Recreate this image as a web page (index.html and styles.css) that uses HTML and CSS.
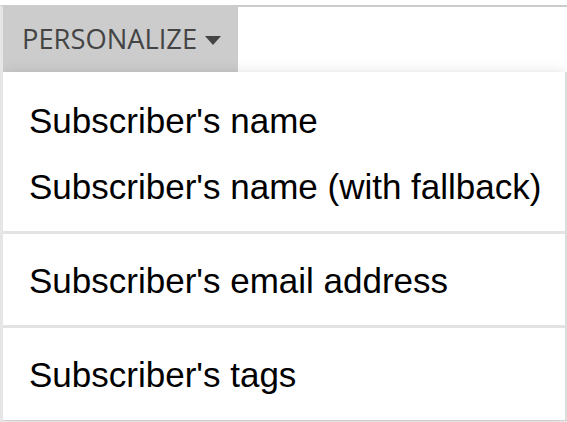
FILE: index.html
```html
<!DOCTYPE html>
<html lang="en">
<head>
<meta charset="utf-8">
<title>Personalize</title>
<link rel="stylesheet" href="styles.css">
</head>
<body>
<div class="editor">
  <div class="toolbar">
    <div class="dropdown">
      <button class="btn" type="button">PERSONALIZE<span class="caret"></span></button>
      <ul class="menu">
        <li class="item">Subscriber's name</li>
        <li class="item">Subscriber's name (with fallback)</li>
        <li class="divider"></li>
        <li class="item">Subscriber's email address</li>
        <li class="divider"></li>
        <li class="item">Subscriber's tags</li>
      </ul>
    </div>
  </div>
</div>
</body>
</html>
```

FILE: styles.css
```css
html, body {
  margin: 0;
  padding: 0;
  background: #ffffff;
  overflow: hidden;
}

.editor {
  margin-top: 5px;
  border-top: 2px solid #cccccc;
  border-left: 3px solid #e6e6e6;
  height: 417px;
  box-sizing: border-box;
  position: relative;
  overflow: hidden;
}

.toolbar {
  display: flex;
  height: 65px;
}

.dropdown {
  position: relative;
  z-index: 2;
}

.btn {
  display: flex;
  align-items: center;
  height: 67px;
  margin-top: -2px;
  padding: 0 17px 0 19px;
  border: 0;
  background: #cccccc;
  color: #444444;
  font-family: "Open Sans", sans-serif;
  font-size: 27.3px;
  font-weight: 400;
  text-transform: uppercase;
  cursor: pointer;
}

.caret {
  display: block;
  width: 0;
  height: 0;
  margin-left: 8px;
  margin-top: 3px;
  border-top: 9px solid #444444;
  border-left: 8px solid transparent;
  border-right: 8px solid transparent;
}

.menu {
  position: absolute;
  top: 65px;
  left: 0;
  width: 562px;
  margin: 0;
  padding: 16px 0 12px;
  list-style: none;
  background: #ffffff;
  border-right: 2px solid #dddddd;
  border-bottom: 1px solid #cfcfcf;
  box-shadow: 0 3px 14px rgba(0, 0, 0, 0.18);
}

.item {
  padding: 9px 26px;
  line-height: 48px;
  font-family: "Liberation Sans", Arial, sans-serif;
  font-size: 35px;
  color: #000000;
  white-space: nowrap;
}

.divider {
  height: 3px;
  margin: 11px 0 14px;
  background: #e3e3e3;
}
```
